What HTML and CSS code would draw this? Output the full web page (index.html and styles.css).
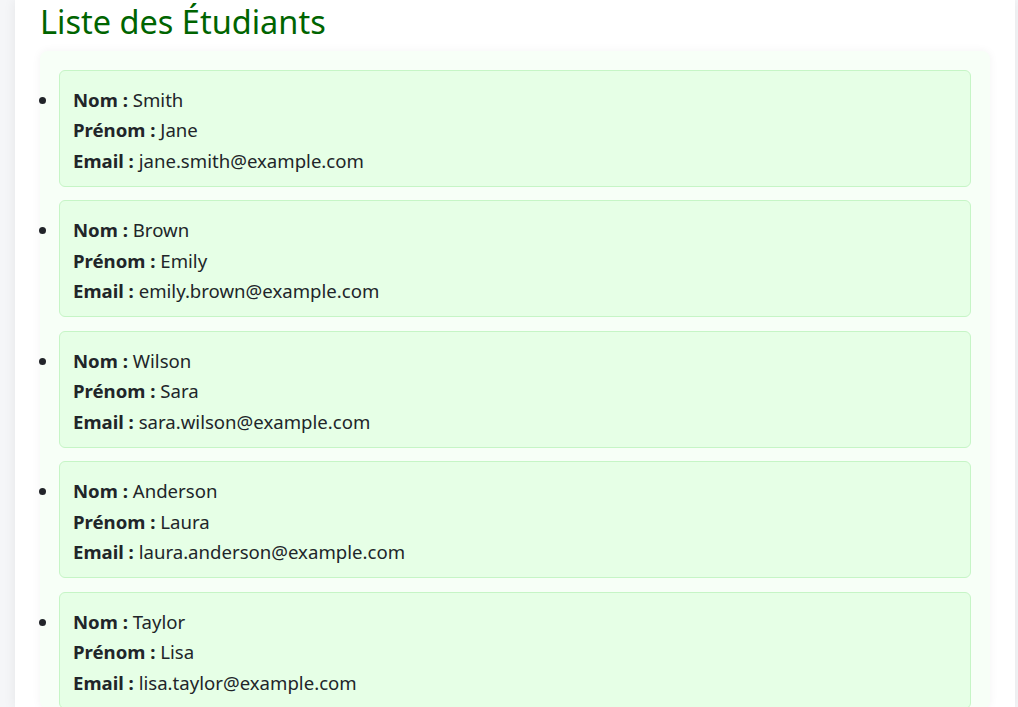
FILE: index.html
```html
<!DOCTYPE html>
<html lang="fr">
<head>
<meta charset="utf-8">
<title>Liste des Étudiants</title>
<link rel="stylesheet" href="styles.css">
</head>
<body>
<div class="container">
  <h2 class="title">Liste des Étudiants</h2>
  <ul class="students">
    <li class="student">
      <div><strong>Nom :</strong> Smith</div>
      <div><strong>Prénom :</strong> Jane</div>
      <div><strong>Email :</strong> jane.smith@example.com</div>
    </li>
    <li class="student">
      <div><strong>Nom :</strong> Brown</div>
      <div><strong>Prénom :</strong> Emily</div>
      <div><strong>Email :</strong> emily.brown@example.com</div>
    </li>
    <li class="student">
      <div><strong>Nom :</strong> Wilson</div>
      <div><strong>Prénom :</strong> Sara</div>
      <div><strong>Email :</strong> sara.wilson@example.com</div>
    </li>
    <li class="student">
      <div><strong>Nom :</strong> Anderson</div>
      <div><strong>Prénom :</strong> Laura</div>
      <div><strong>Email :</strong> laura.anderson@example.com</div>
    </li>
    <li class="student">
      <div><strong>Nom :</strong> Taylor</div>
      <div><strong>Prénom :</strong> Lisa</div>
      <div><strong>Email :</strong> lisa.taylor@example.com</div>
    </li>
  </ul>
</div>
</body>
</html>
```
FILE: styles.css
```css
html, body {
  margin: 0;
  padding: 0;
}
body {
  background: #f5f6f8;
  font-family: "Noto Sans", "Open Sans", sans-serif;
  color: #212529;
  overflow: hidden;
  height: 707px;
}
.container {
  margin-left: 15px;
  width: 1000px;
  min-height: 707px;
  background: #ffffff;
  box-shadow: 0 0 12px rgba(0, 0, 0, 0.07);
  padding: 0 25px;
  box-sizing: border-box;
}
.title {
  margin: 0 0 7px 0;
  font-size: 32.5px;
  font-weight: 400;
  line-height: 44px;
  color: #006400;
}
.students {
  margin: 0;
  width: 950px;
  box-sizing: border-box;
  padding: 19px 19px 0 19px;
  background: #f7fff7;
  border-radius: 8px;
  box-shadow: 0 0 10px rgba(0, 0, 0, 0.05);
  list-style: disc;
}
.student {
  background: #e6ffe6;
  border: 1px solid #c6f5c6;
  border-radius: 6px;
  padding: 13.6px 13px 9.6px 13px;
  margin-bottom: 13.8px;
  font-size: 18.6px;
  line-height: 30.5px;
}
.student strong {
  font-weight: 700;
}
```
